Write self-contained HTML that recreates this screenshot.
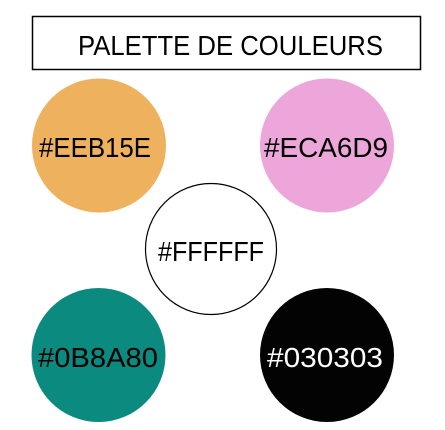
<!DOCTYPE html>
<html><head><style>body{margin:0;background:#fff}svg{display:block}</style></head><body>
<svg width="445" height="430" xmlns="http://www.w3.org/2000/svg" font-family="Liberation Sans, sans-serif" font-size="28">
<rect x="32.5" y="16.5" width="388" height="53" fill="none" stroke="#000" stroke-width="1.5"/>
<text x="78" y="55" textLength="305" lengthAdjust="spacingAndGlyphs">PALETTE DE COULEURS</text>
<circle cx="99" cy="145.5" r="67" fill="#EEB15E"/>
<text x="39" y="157" textLength="112" lengthAdjust="spacingAndGlyphs">#EEB15E</text>
<circle cx="327" cy="145.5" r="67" fill="#ECA6D9"/>
<text x="264" y="157" textLength="124" lengthAdjust="spacingAndGlyphs">#ECA6D9</text>
<circle cx="211" cy="249" r="65.5" fill="#fff" stroke="#000" stroke-width="1.2"/>
<text x="158" y="261" textLength="106" lengthAdjust="spacingAndGlyphs">#FFFFFF</text>
<circle cx="98.5" cy="355" r="67" fill="#0B8A80"/>
<text x="38" y="367" textLength="120" lengthAdjust="spacingAndGlyphs">#0B8A80</text>
<circle cx="327" cy="355" r="67" fill="#030303"/>
<text x="267" y="367" textLength="116" lengthAdjust="spacingAndGlyphs" fill="#fff">#030303</text>
</svg>
</body></html>
